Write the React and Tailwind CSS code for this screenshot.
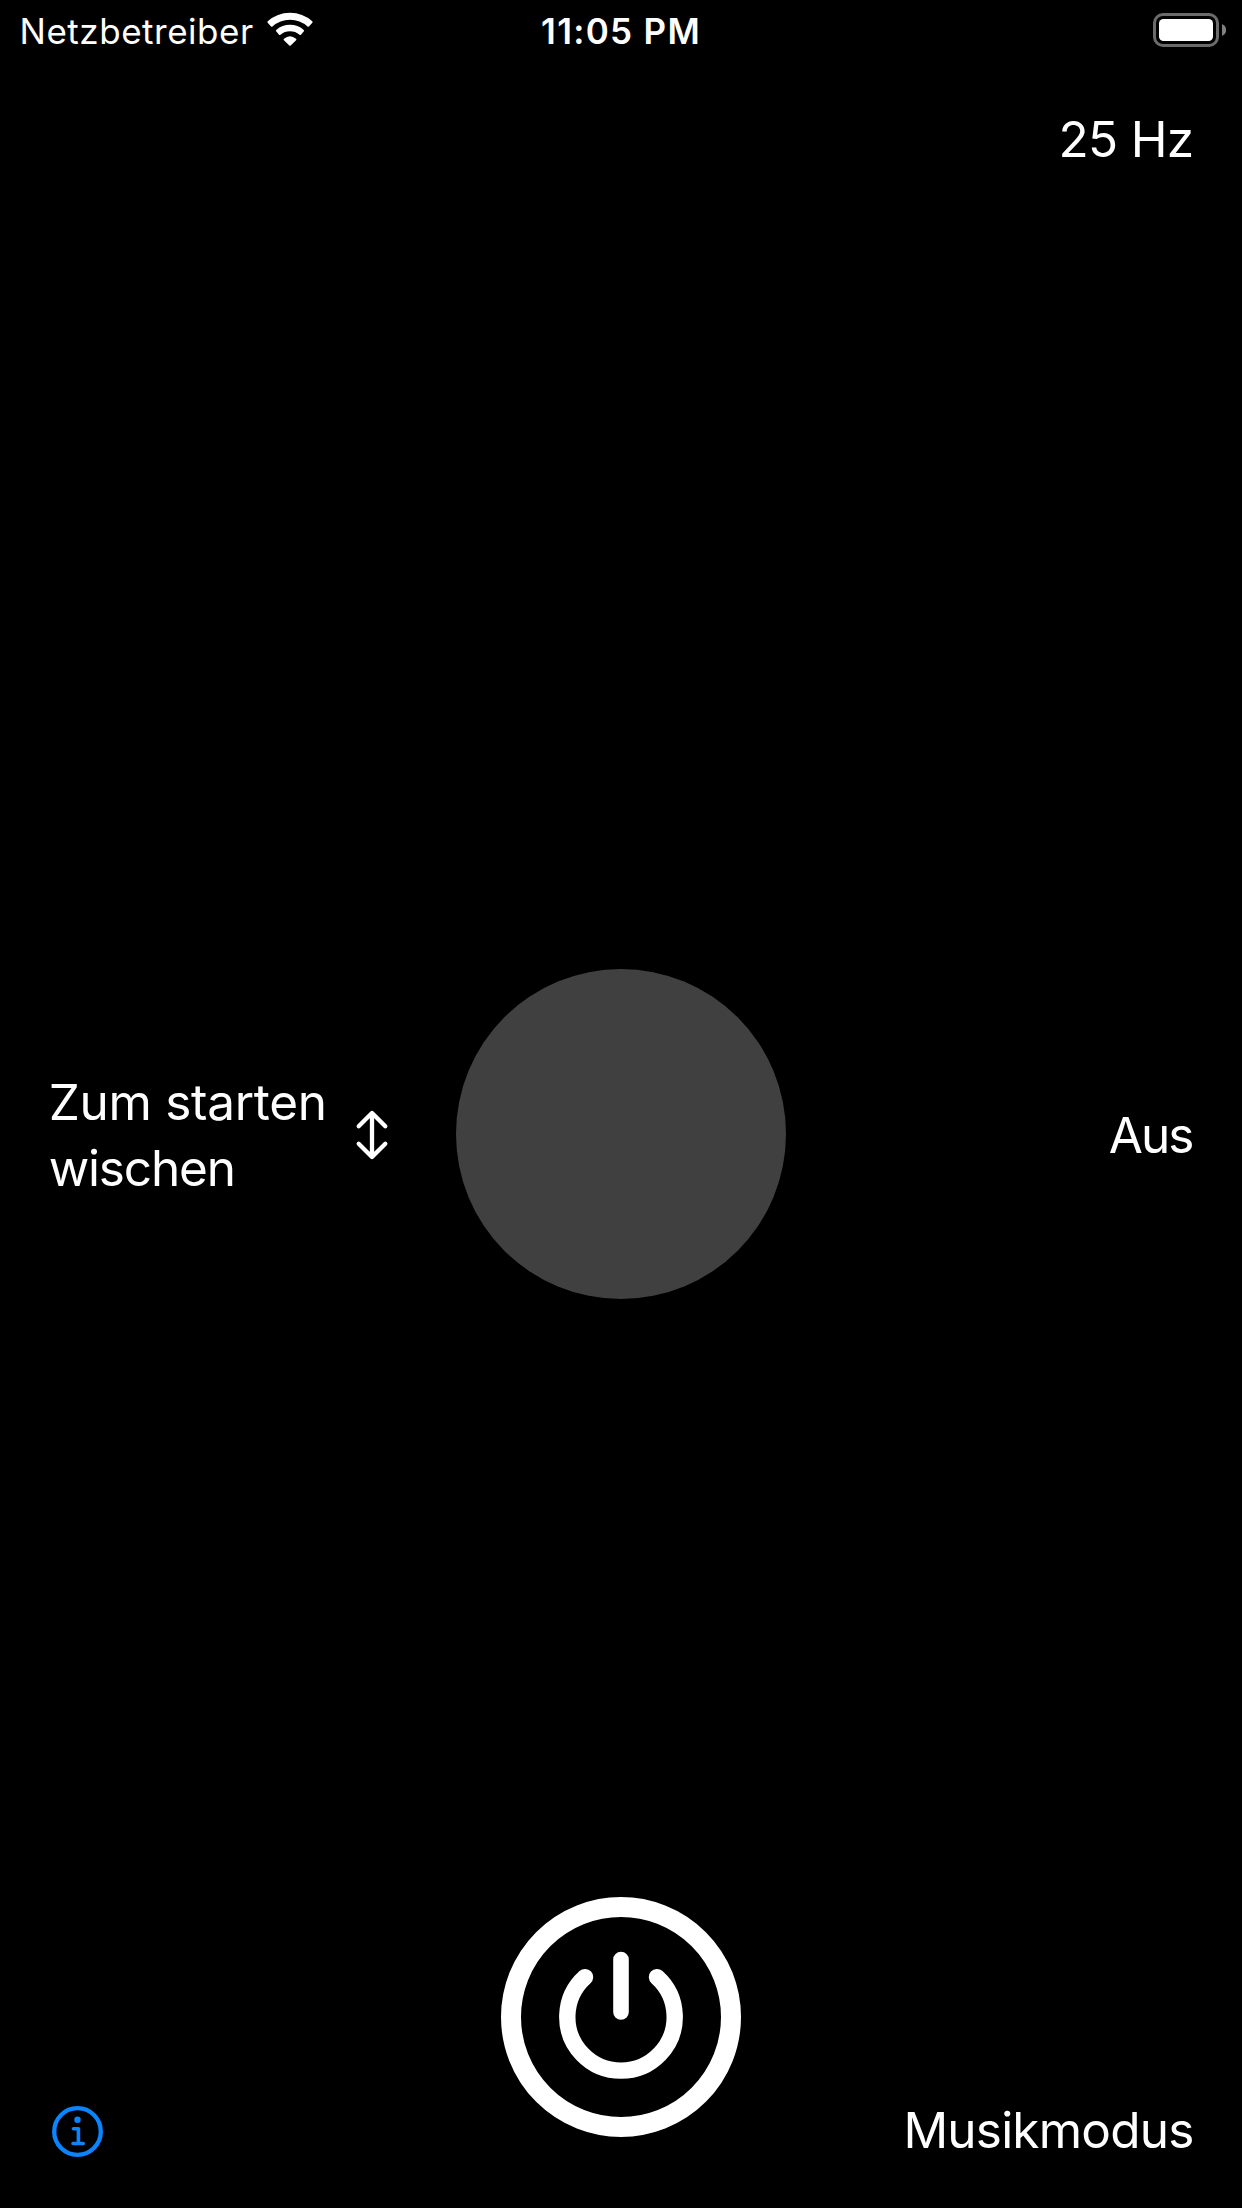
function WifiIcon() {
  return (
    <svg className="mt-[2px] ml-[9px]" width="48" height="36" viewBox="266 12 48 36" fill="#fff" stroke="#fff" strokeWidth="2" strokeLinejoin="round">
      <path d="M268.4 22.05A32.1 32.1 0 0 1 311.6 22.05L308.2 25.75A27.1 27.1 0 0 0 271.8 25.75Z" />
      <path d="M276.9 30.65A20.2 20.2 0 0 1 303.1 30.65L300.2 34A15.8 15.8 0 0 0 279.8 34Z" />
      <path d="M284.6 39.5Q290 35 295.4 39.5L290 44.7Z" />
    </svg>
  );
}

function BatteryIcon() {
  return (
    <div className="flex items-center gap-[3px]">
      <div className="flex h-[34px] w-[66px] rounded-[10px] border-[3px] border-[#6b6b6b] p-[3px]">
        <div className="flex-1 rounded-[4.5px] bg-white" />
      </div>
      <svg width="4" height="12" viewBox="0 0 4 12">
        <path d="M0 0A6.4 6.4 0 0 1 0 12Z" fill="#808080" />
      </svg>
    </div>
  );
}

function StatusBar() {
  return (
    <header className="grid h-[60px] grid-cols-3 items-start text-[35px] leading-[42px]">
      <div className="flex pl-[19.5px] pt-[10px]">
        <span className="w-[237.5px] whitespace-nowrap tracking-[0.53px]">Netzbetreiber</span>
        <WifiIcon />
      </div>
      <div className="pt-[10px] text-center font-semibold tracking-[1.3px]">11:05 PM</div>
      <div className="flex justify-end pr-[16px] pt-[13px]">
        <BatteryIcon />
      </div>
    </header>
  );
}

function SwipeIcon() {
  return (
    <svg width="36" height="52" viewBox="-18 -26 36 52" fill="none" stroke="#fff" strokeWidth="4.3" strokeLinecap="round" strokeLinejoin="round">
      <path d="M0-21V21M-13.3-8.7L0-22L13.3-8.7M-13.3 8.7L0 22L13.3 8.7" />
    </svg>
  );
}

function InfoIcon() {
  return (
    <svg className="mb-[1px] ml-[49.8px] self-end" width="55" height="55" viewBox="-27.5 -27.5 55 55" fill="none" stroke="#0a84ff" strokeWidth="3.6" strokeLinecap="round" strokeLinejoin="round">
      <circle r="23.3" strokeWidth="4.3" />
      <circle cy="-11.8" r="3.2" fill="#0a84ff" stroke="none" />
      <path d="M-4-2.7H.9V12M-4.5 12H5.7" />
    </svg>
  );
}

function PowerButton() {
  return (
    <button className="size-[240px] rounded-full border-[20px] border-white">
      <svg width="200" height="200" viewBox="-100 -100 200 200" fill="none" stroke="#fff" strokeLinecap="round">
        <path d="M-36-39.9A53.7 53.7 0 1 0 36-39.9" strokeWidth="16.4" />
        <path d="M0-57.5V-5" strokeWidth="15.6" />
      </svg>
    </button>
  );
}

export default function App() {
  return (
    <main className="flex h-[2208px] w-[1242px] flex-col overflow-hidden bg-black font-['Inter',sans-serif] text-[49.5px] text-white">
      <StatusBar />
      <div className="mt-[49px] pr-[48.6px] text-right leading-[60px] tracking-[-0.7px]">25 Hz</div>
      <section className="mt-[800px] grid h-[330px] grid-cols-[456px_330px_456px] items-center">
        <div className="flex items-center pl-[48.7px] pt-[2px]">
          <p className="w-[305.6px] leading-[66px]">
            <span className="tracking-[-0.29px]">Zum starten</span>
            <br />
            <span className="tracking-[-1.17px]">wischen</span>
          </p>
          <SwipeIcon />
        </div>
        <div className="size-[330px] rounded-full bg-[#404040]" />
        <div className="pr-[49.4px] pt-[2px] text-right leading-[60px] tracking-[-1.9px]">Aus</div>
      </section>
      <footer className="mt-[598px] grid h-[263px] grid-cols-[501px_240px_501px]">
        <InfoIcon />
        <PowerButton />
        <div className="self-end pr-[48.4px] text-right leading-[60px] tracking-[-0.78px]">Musikmodus</div>
      </footer>
    </main>
  );
}
